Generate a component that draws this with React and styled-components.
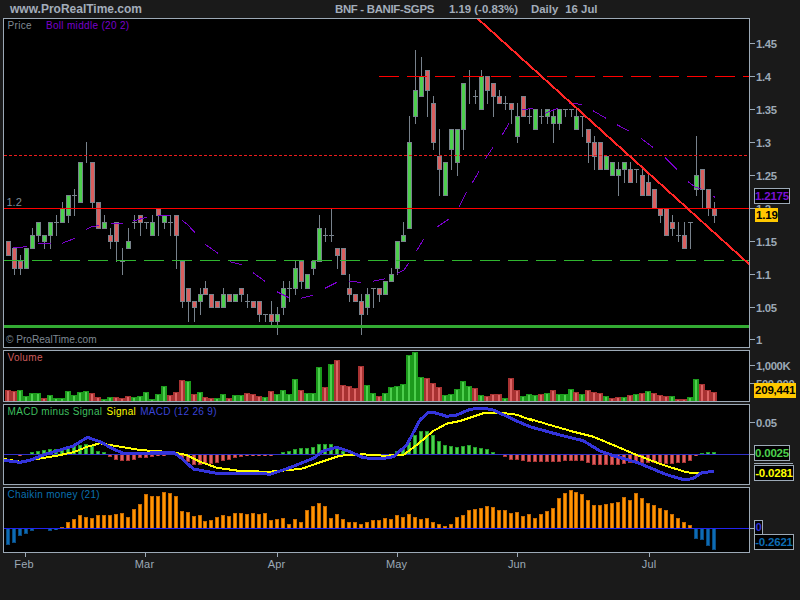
import React from 'react';
import styled, { createGlobalStyle } from 'styled-components';

const GlobalStyle = createGlobalStyle`
  html, body { margin: 0; padding: 0; background: #1a1a1a; overflow: hidden; }
  body { font-family: "Liberation Sans", Arial, sans-serif; }
`;

const Page = styled.div`
  width: 800px;
  height: 600px;
  background: #1a1a1a;
  color: #a0aab8;
  display: flex;
  flex-direction: column;
`;

const Header = styled.header`
  height: 18px;
  display: flex;
  align-items: center;
  padding-left: 10px;
  font-size: 11.4px;
  font-weight: 700;
  color: #a3adba;
  white-space: nowrap;
`;
const Brand = styled.span`
  width: 325px;
  font-size: 12px;
`;
const HeaderItem = styled.span`
  margin-right: ${p => p.$gap}px;
  letter-spacing: ${p => p.$track ?? 0}px;
`;

const Panes = styled.main`
  display: flex;
  flex-direction: column;
  gap: 2px;
`;
const Pane = styled.section`
  display: flex;
  height: ${p => p.$h}px;
`;
const Plot = styled.div`
  position: relative;
  box-sizing: border-box;
  width: 747px;
  height: 100%;
  margin-left: 3px;
  background: #000;
  border: 1px solid #9ca9b6;
  overflow: hidden;
`;
const PlotSvg = styled.svg`
  display: block;
  width: 745px;
  height: 100%;
`;
const Axis = styled.div`
  position: relative;
  width: 50px;
  height: 100%;
`;
const AxisSvg = styled.svg`
  display: block;
  width: 50px;
  height: 100%;
  overflow: hidden;
`;
const AxisText = styled.text`
  font-family: "Liberation Sans", Arial, sans-serif;
  font-size: 11.3px;
  font-weight: 700;
  letter-spacing: -0.35px;
  fill: #9ca9b6;
`;
const Legend = styled.div`
  position: absolute;
  left: ${p => p.$left ?? 3.5}px;
  top: 0;
  display: flex;
  gap: ${p => p.$gap ?? 4}px;
  font-size: 10px;
  letter-spacing: 0.32px;
  line-height: 14px;
  white-space: nowrap;
`;
const LegendItem = styled.span`
  color: ${p => p.$color};
`;
const Copyright = styled.div`
  position: absolute;
  left: 2px;
  bottom: 0;
  font-size: 10.1px;
  line-height: 14px;
  color: #7f8994;
`;
const Badge = styled.div`
  position: absolute;
  box-sizing: border-box;
  left: ${p => p.$left}px;
  top: ${p => p.$top}px;
  width: ${p => p.$w}px;
  height: ${p => p.$h}px;
  background: ${p => p.$bg ?? '#000'};
  border: 1px solid ${p => p.$bg ?? '#9ca9b6'};
  color: ${p => p.$color};
  font-size: 11.5px;
  font-weight: 700;
  letter-spacing: -0.2px;
  line-height: ${p => p.$h - 2}px;
  text-align: center;
  white-space: nowrap;
`;
const DoubledBadge = styled(Badge)`
  &::before {
    content: '';
    position: absolute;
    left: -1px;
    right: 0;
    top: -3px;
    height: 1px;
    background: #9ca9b6;
  }
`;
const TimeAxis = styled.svg`
  display: block;
  width: 749px;
  height: 47px;
  margin-left: 1px;
`;
const TimeText = styled.text`
  font-family: "Liberation Sans", Arial, sans-serif;
  font-size: 11px;
  letter-spacing: 0.15px;
  fill: #9ca9b6;
`;
const PlotText = styled.text`
  font-family: "Liberation Sans", Arial, sans-serif;
  font-size: 11px;
  fill: #7f8994;
`;
const Crisp = styled.g`
  shape-rendering: crispEdges;
`;

/* ---- data ---- */
const cx = i => 8 + 6 * i - (i >= 33 ? 1 : 0) - (i >= 95 ? 1 : 0);
const py = c => Math.round(208.3 + (20 - c) * 6.6);

// [kind, top, bottom, high, low] in cents above 1.00
const candles = [
  ['r',15,13],['r',14,11,14,10],['r',12,11,13,10],['g',14,11],['g',16,14,17,14],['g',18,16,18,15],['g',16,15,16,14],['g',18,16,18,14],
  ['d',18,18,19,16],['g',20,18,21,18],['g',22,19,22,18],['d',22,22,23,19],['g',27,21],['w',27,27,30,27],['r',27,21,27,20],['r',21,17],
  ['g',18,17,19,17],['r',16,15,17,14],['r',18,15,18,12],['d',12,12,14,10],['g',15,14,17,14],['d',18,18,19,17],['r',19,18,19,16],['d',18,18,18,17],
  ['g',18,16,19,16],['r',20,19,20,16],['g',19,18,19,17],['d',18,18,19,16],['r',19,16,19,11],['r',12,6,12,5],['r',8,6,8,3],['r',6,5,6,3],
  ['g',7,6,8,4],['r',8,7,9,7],['r',7,5],['r',6,5],['g',7,5,8,5],['r',7,6],['g',7,6],['r',8,7,8,6],
  ['d',6,6,7,5],['r',6,5],['r',6,4,6,3],['d',4,4,4,3],['r',4,3,6,2],['g',4,3,5,1],['g',8,5,9,4],['d',8,8,9,6],
  ['g',11,8,12,7],['r',12,9,12,8],['g',10,8],['g',12,11,12,10],['g',17,12,19,12],['d',16,16,17,15],['d',16,16,20,15],['r',14,13,14,11],
  ['r',14,10],['r',8,7,10,6],['r',7,6],['r',6,4,7,1],['g',7,5,8,4],['d',8,8,8,5],['r',8,7,8,6],['g',9,7],
  ['g',10,9,11,9],['g',15,11,15,10],['g',16,15,18,15],['g',30,17,34,17],['g',38,34,44,33],['g',40,37,43,37],['r',41,38,41,34],['r',36,30,37,29],
  ['r',28,26,32,22],['g',27,22],['g',32,29,32,26],['g',32,27,32,25],['g',39,32,39,29],['w',37,37,41,36],['d',37,37,38,36],['g',40,35,41,35],
  ['r',40,38,40,36],['r',39,37,39,34],['r',37,36,38,36],['d',36,36,37,35],['r',36,35,36,33],['g',34,31,36,30],['r',37,34],['d',34,34,35,33],
  ['g',35,32],['d',34,34,35,33],['g',35,34,35,33],['g',34,33,35,30],['g',35,33,35,32],['d',35,35,35,34],['d',35,35,35,34],['g',34,32,35,32],
  ['d',34,34,34,31],['r',32,30,32,27],['r',30,28,31,26],['r',30,26],['g',28,26],['g',27,25],['g',26,25,27,22],['g',27,26,27,24],
  ['r',26,24,27,24],['d',26,26,26,24],['r',25,22,26,22],['r',24,22,25,22],['r',23,20],['r',20,19,20,18],['r',20,16],['r',18,17,19,16],
  ['d',16,16,18,15],['r',16,14,18,14],['d',18,18,18,14],['g',25,23,31,22],['r',26,23,26,20],['r',23,20,23,19],['r',20,19,21,18],
];

const bollSegments = [
  [[13,247.7],[27,246.7]],[[38,244],[51,243.3]],[[62,243.3],[75,238.3]],[[86,229.3],[92,226.5],[99,225.7]],[[111,223.3],[123,223.3]],
  [[133,221],[147,217.3]],[[158,216],[170,215]],[[182,220.3],[188,225],[195,232.7]],[[205,244.3],[218,253.3]],[[230,261.7],[242,264.7]],
  [[253,272.7],[265,281.3]],[[277,291.7],[289,297.7]],[[301,298.3],[313,295.3]],[[325,288.3],[337,282.3]],[[349,281.3],[361,282.3]],
  [[373,281.3],[385,278.7]],[[397,273.3],[404,270],[409,262.7]],[[416.7,250.7],[424,238.7]],[[436.7,227.3],[448.7,219.3]],[[459,207.3],[466.7,191.7]],
  [[472,183.3],[479,171.3]],[[485,159.3],[493,147.3]],[[502,135.3],[509,123.3]],[[522,110],[533,108.3]],[[545,113.3],[558,108.3]],
  [[569,103.3],[582,104.3]],[[593,110.7],[606,118.3]],[[617,124.7],[629,131]],[[641,138.3],[653,147.3]],[[665,157.7],[677,169.3]],
  [[688,181.7],[695,187],[701,189]],[[713,196],[715,197.3]],
];

// kind + bar top (3x zoom units, baseline 168)
const volumes = [
  'r135','r138','g135','g152','g145','g145','r160','g150','g158','g158','g138','g150','g142','g138','r145','r155','g162','g155','r155','r158',
  'r153','g155','g152','g141','g162','g148','g123','r151','r142','r105','g108','r148','g141','r157','r160','g160','g148','r160','g151','g149',
  'r145','r147','r154','g155','r138','g148','g136','g148','g102','r136','g145','g145','g66','r126','g57','r46','r120','r123','r129','r63',
  'g120','g144','r153','g144','g126','g123','g117','g30','g21','g96','r99','r114','r126','g150','g147','g132','g108','g123','r129','g150',
  'r153','r147','r147','g159','r99','r135','g153','g147','g150','r147','g144','r135','g147','g147','g132','r141','g147','r135','r141','r144',
  'g153','r159','r156','g156','r150','g147','r144','g138','r144','r150','r153','g153','r162','r162','g156','g102','r117','r135','r141',
];

const histogram = [
  0,0,-1,0,2,3,4,5,5,5,6,8,9,10,8,3,2,-2,-5,-6,-6,-5,-3,-3,-2,-1,-1,0,0,-4,-7,-10,-10,-9,-9,-8,-6,-5,-3,-2,-1,-1,-1,-1,
  -1,0,2,3,5,6,6,7,10,10,10,6,3,0,0,-1,0,0,0,-1,0,3,6,12,19,23,23,19,13,9,8,7,8,9,7,6,5,2,0,-2,-5,-5,-6,-7,-7,-7,-7,-7,-7,
  -6,-6,-6,-6,-8,-10,-10,-10,-10,-10,-9,-8,-8,-8,-8,-8,-8,-9,-9,-8,-8,-6,-1,1,2,2,
];

const chaikin = [
  -16,-14,-7,-5,-2,0,0,-2,-1,1,6,9,13,11,10,13,13,13,14,15,11,19,24,34,32,32,36,35,32,17,16,12,13,7,8,11,13,12,15,15,14,15,14,15,
  8,9,10,4,9,6,18,22,25,22,10,14,9,6,6,4,6,8,8,10,9,13,11,14,11,9,10,6,4,2,4,11,13,18,19,20,22,21,18,18,15,16,12,14,10,
  14,17,20,30,35,38,36,34,28,23,23,24,25,26,31,28,35,30,25,23,20,18,14,10,6,3,-10,-11,-17,-21,
];

const z7 = (x, y) => [x / 3, 345 + y / 3];
const z8 = (x, y) => [270 + x / 3, 345 + y / 3];
const z9 = (x, y) => [530 + x / 3, 345 + y / 3];
const z12 = (x, y) => [530 + x / 3, 470 + y / 3];

const signalLine = [
  z7(11,342),z7(30,345),z7(60,350),z7(110,342),z7(170,332),z7(220,322),z7(262,305),z7(300,295),z7(360,305),z7(420,315),z7(520,322),z7(560,330),z7(600,350),z7(650,368),z7(720,378),z7(800,380),
  z8(0,380),z8(60,375),z8(100,370),z8(150,352),z8(210,332),z8(280,328),z8(340,332),z8(400,330),z8(440,300),z8(490,258),z8(530,236),z8(570,228),z8(640,205),z8(690,203),z8(740,209),z8(790,228),
  z9(0,222),z9(60,240),z9(130,260),z9(190,275),z9(250,300),z9(320,330),z9(400,360),z9(470,382),z9(510,385),z12(540,5),
];
const macdLine = [
  z7(11,346),z7(60,352),z7(90,346),z7(130,330),z7(180,315),z7(220,303),z7(262,277),z7(300,290),z7(340,312),z7(370,325),z7(420,325),z7(520,322),z7(545,340),z7(580,372),z7(650,385),z7(800,387),
  z8(0,388),z8(40,375),z8(80,360),z8(130,340),z8(160,318),z8(200,307),z8(240,320),z8(280,338),z8(330,342),z8(370,335),z8(410,300),z8(450,225),z8(475,202),z8(490,202),z8(530,214),z8(560,210),z8(600,193),z8(640,189),z8(670,195),z8(740,228),z8(780,245),
  z9(0,245),z9(60,262),z9(110,275),z9(160,287),z9(210,318),z9(260,335),z9(320,352),z9(400,385),z12(410,14),z12(465,30),z12(490,25),z12(515,8),z12(553,4),
];
const toPoints = pts => pts.map(p => p.map(v => v.toFixed(1)).join(',')).join(' ');

/* ---- chart parts ---- */
const FILL = { g: '#4dcf4d', r: '#d95f5f' };
const GREY = '#78828c';

const Candle = ({ data, i }) => {
  const [kind, top, bottom, high = top, low = bottom] = data;
  const x = cx(i);
  const yt = py(top);
  const yb = py(bottom);
  const isBody = kind === 'g' || kind === 'r';
  return (
    <>
      <rect x={x} y={py(high)} width="1" height={py(low) - py(high) + 1} fill={GREY} />
      {kind === 'd' && <rect x={x - 2} y={yt} width="5" height="1" fill={GREY} />}
      {isBody && <rect x={x - 2} y={yt} width="5" height={yb - yt + 1} fill={GREY} />}
      {isBody && <rect x={x - 1} y={yt + 1} width="3" height={yb - yt - 1} fill={FILL[kind]} />}
    </>
  );
};

const VolumeBar = ({ data, i }) => {
  const kind = data[0];
  const h = Math.round((168 - Number(data.slice(1))) / 3);
  const x = cx(i);
  const y = 401 - h;
  return (
    <>
      <rect x={x - 3} y={y} width="6" height={h} fill={kind === 'g' ? '#1c9a1c' : '#a83232'} />
      <rect x={x - 1} y={y + 1} width="2" height={Math.max(h - 1, 0)} fill={kind === 'g' ? '#4dcf4d' : '#dc6464'} />
    </>
  );
};

const SignedBar = ({ v, i, base, edge, core }) => {
  if (!v) return null;
  const h = Math.abs(v);
  const y = v > 0 ? base - h : base + 1;
  const x = cx(i);
  return (
    <>
      <rect x={x - 2} y={y} width="4" height={h} fill={edge} />
      <rect x={x - 1} y={y + (v > 0 ? 1 : 0)} width="2" height={Math.max(h - 1, 1)} fill={core} />
    </>
  );
};

const PriceChart = () => (
  <PlotSvg viewBox="4 19 745 328">
    <Crisp>
      {candles.map((c, i) => <Candle key={i} data={c} i={i} />)}
      <line x1="4" x2="749" y1="155.5" y2="155.5" stroke="#ee1c1c" strokeDasharray="3 2" />
      <line x1="379" x2="749" y1="76.5" y2="76.5" stroke="#ff0000" strokeDasharray="20 8" />
      <line x1="4" x2="749" y1="260.5" y2="260.5" stroke="#2fb52f" strokeDasharray="20 8" />
      <rect x="4" y="325" width="745" height="3" fill="#33aa33" />
      <rect x="4" y="208" width="745" height="1" fill="#ff0000" />
      {bollSegments.map((s, i) => (
        <polyline key={i} points={toPoints(s)} fill="none" stroke="#7a00cc" strokeWidth="1" />
      ))}
      <line x1="477" y1="18" x2="750" y2="265" stroke="#ff2626" strokeWidth="2" />
    </Crisp>
    <PlotText x="6.5" y="206">1.2</PlotText>
  </PlotSvg>
);

const VolumeChart = () => (
  <PlotSvg viewBox="4 351 745 50">
    <Crisp>
      {volumes.map((v, i) => <VolumeBar key={i} data={v} i={i} />)}
    </Crisp>
  </PlotSvg>
);

const MacdChart = () => (
  <PlotSvg viewBox="4 405 745 79">
    <Crisp>
      {histogram.map((v, i) => (
        <SignedBar key={i} v={v} i={i} base={454} edge={v > 0 ? '#229f29' : '#aa3636'} core={v > 0 ? '#4dcf4d' : '#de6060'} />
      ))}
      <rect x="4" y="454" width="745" height="1" fill="#3030c8" />
      <polyline points={toPoints(signalLine)} fill="none" stroke="#ffff00" strokeWidth="2" />
      <polyline points={toPoints(macdLine)} fill="none" stroke="#3434dc" strokeWidth="3" />
    </Crisp>
  </PlotSvg>
);

const ChaikinChart = () => (
  <PlotSvg viewBox="4 488 745 64">
    <Crisp>
      {chaikin.map((v, i) => (
        <SignedBar key={i} v={v} i={i} base={528} edge={v > 0 ? '#c96a00' : '#0a4a80'} core={v > 0 ? '#ff9500' : '#0c6cb4'} />
      ))}
      <rect x="4" y="528" width="745" height="1" fill="#2222ee" />
    </Crisp>
  </PlotSvg>
);

const Tick = ({ y, x2 = 755 }) => <rect x="750" y={y} width={x2 - 750} height="1" fill="#9ca9b6" />;

const PriceAxis = () => {
  const labels = [['1.45', 43], ['1.4', 76], ['1.35', 109], ['1.3', 142], ['1.25', 175], ['1.2', 208], ['1.15', 241], ['1.1', 274], ['1.05', 307], ['1', 339]];
  return (
    <AxisSvg viewBox="750 18 50 330">
      <Crisp>{labels.map(([, y]) => <Tick key={y} y={y} />)}</Crisp>
      {labels.map(([t, y]) => <AxisText key={t} x="756" y={y + 5}>{t}</AxisText>)}
    </AxisSvg>
  );
};

const VolumeAxis = () => (
  <AxisSvg viewBox="750 350 50 52">
    <Crisp><Tick y={365} /><Tick y={383} /></Crisp>
    <AxisText x="756" y="370">1,000K</AxisText>
    <AxisText x="756" y="388">500,000</AxisText>
  </AxisSvg>
);
const MacdAxis = () => (
  <AxisSvg viewBox="750 404 50 81">
    <Crisp><Tick y={422} /><Tick y={454} /></Crisp>
    <AxisText x="756" y="427">0.05</AxisText>
  </AxisSvg>
);
const ChaikinAxis = () => (
  <AxisSvg viewBox="750 487 50 66">
    <Crisp><Tick y={528} /></Crisp>
  </AxisSvg>
);

const months = [['Feb', 25, 24], ['Mar', 145, 144.5], ['Apr', 277, 276.5], ['May', 397, 396.5], ['Jun', 517, 517], ['Jul', 649, 649]];

export default function App() {
  return (
    <Page>
      <GlobalStyle />
      <Header>
        <Brand>www.ProRealTime.com</Brand>
        <HeaderItem $gap={15} $track={-0.3}>BNF - BANIF-SGPS</HeaderItem>
        <HeaderItem $gap={13}>1.19 (-0.83%)</HeaderItem>
        <HeaderItem $gap={7}>Daily</HeaderItem>
        <HeaderItem $gap={0}>16 Jul</HeaderItem>
      </Header>
      <Panes>
        <Pane $h={330}>
          <Plot>
            <PriceChart />
            <Legend $gap={14}>
              <LegendItem $color="#808a94">Price</LegendItem>
              <LegendItem $color="#7a00cc">Boll middle (20 2)</LegendItem>
            </Legend>
            <Copyright>© ProRealTime.com</Copyright>
          </Plot>
          <Axis>
            <PriceAxis />
            <Badge $left={4} $top={170} $w={36} $h={16} $color="#7a10d4">1.2175</Badge>
            <Badge $left={5} $top={190} $w={23} $h={14} $bg="#ffc800" $color="#000">1.19</Badge>
          </Axis>
        </Pane>
        <Pane $h={52}>
          <Plot>
            <VolumeChart />
            <Legend><LegendItem $color="#cf5c5c">Volume</LegendItem></Legend>
          </Plot>
          <Axis>
            <VolumeAxis />
            <Badge $left={4} $top={33} $w={42} $h={15} $bg="#ffc800" $color="#000">209,441</Badge>
          </Axis>
        </Pane>
        <Pane $h={81}>
          <Plot>
            <MacdChart />
            <Legend>
              <LegendItem $color="#3fbf5f">MACD minus Signal</LegendItem>
              <LegendItem $color="#ffff00">Signal</LegendItem>
              <LegendItem $color="#3a44d8">MACD (12 26 9)</LegendItem>
            </Legend>
          </Plot>
          <Axis>
            <MacdAxis />
            <Badge $left={4} $top={41} $w={36} $h={16} $color="#4dcf4d">0.0025</Badge>
            <DoubledBadge $left={4} $top={61} $w={40} $h={16} $color="#ffff00">-0.0281</DoubledBadge>
          </Axis>
        </Pane>
        <Pane $h={66}>
          <Plot>
            <ChaikinChart />
            <Legend><LegendItem $color="#0a70b0">Chaikin money (21)</LegendItem></Legend>
          </Plot>
          <Axis>
            <ChaikinAxis />
            <Badge $left={4} $top={33} $w={9} $h={15} $color="#3232d8">0</Badge>
            <Badge $left={4} $top={47} $w={40} $h={16} $color="#0c6cb4">-0.2621</Badge>
          </Axis>
        </Pane>
      </Panes>
      <TimeAxis viewBox="1 553 749 47">
        <Crisp>
          {months.map(([m, t]) => <rect key={m} x={t} y="553" width="1" height="4" fill="#9ca9b6" />)}
        </Crisp>
        {months.map(([m, , c]) => <TimeText key={m} x={c} y="568" textAnchor="middle">{m}</TimeText>)}
      </TimeAxis>
    </Page>
  );
}
